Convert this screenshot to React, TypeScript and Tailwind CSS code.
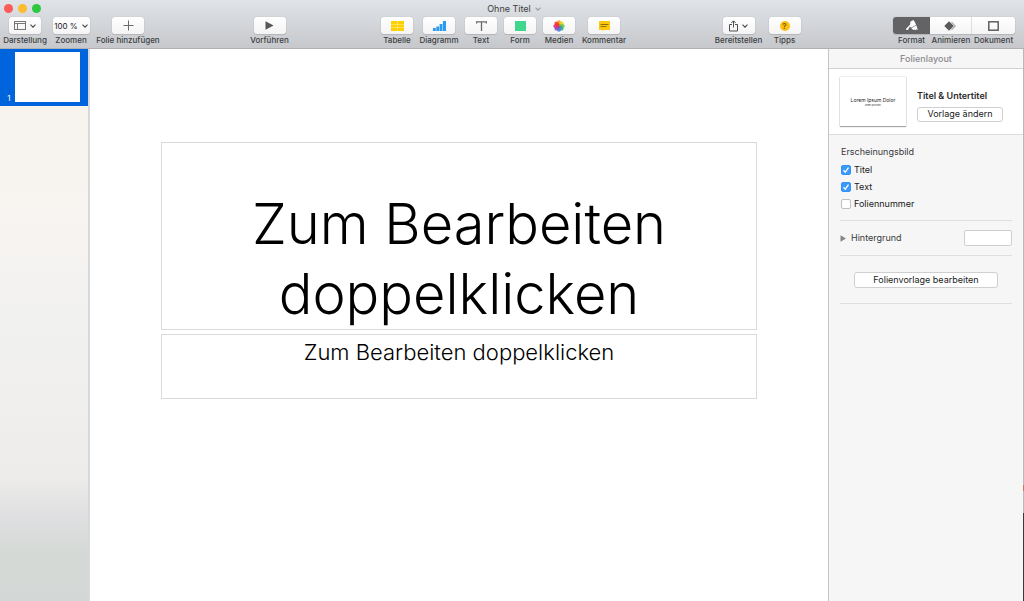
import type { ReactNode } from "react";

const labelClass = "text-[8px] leading-[12px] font-medium text-[#3c3d40] whitespace-nowrap";
const buttonClass =
  "h-[17px] rounded-[3px] bg-gradient-to-b from-white to-[#f4f4f4] shadow-[0_0_1px_rgba(0,0,0,0.3),0_1px_1px_rgba(0,0,0,0.1)] flex items-center justify-center gap-1 text-[#4a4a4a]";

function Chevron() {
  return (
    <svg width="6" height="4" viewBox="0 0 6 4" fill="none" stroke="currentColor" strokeWidth="1.1">
      <path d="M0.5 0.6 3 3.1 5.5 0.6" />
    </svg>
  );
}

function ViewIcon() {
  return (
    <svg width="12" height="9" viewBox="0 0 12 9" fill="none" stroke="#777" strokeWidth="1">
      <rect x="0.5" y="0.5" width="11" height="8" />
      <path d="M0.5 2.5h11M3.5 2.5v6" />
    </svg>
  );
}

function PlusIcon() {
  return (
    <svg width="11" height="11" viewBox="0 0 11 11" stroke="#6a6a6a" strokeWidth="1">
      <path d="M5.5 0.5v10M0.5 5.5h10" />
    </svg>
  );
}

function PlayIcon() {
  return (
    <svg width="9" height="9" viewBox="0 0 9 9" fill="#575757">
      <path d="M0.5 0.2v8.6L8.6 4.5z" />
    </svg>
  );
}

function TableIcon() {
  return (
    <svg width="13" height="10" viewBox="0 0 13 10">
      <rect width="13" height="10" fill="#fff0a0" />
      <path fill="#ffd000" d="M0 0h6.2v3H0zM6.8 0H13v3H6.800zM0 3.500h6.200v3H0zM6.800 3.500H13v3H6.800zM0 7h6.200v3H0zM6.800 7H13v3H6.800z" />
    </svg>
  );
}

function ChartIcon() {
  return (
    <svg width="13" height="10" viewBox="0 0 13 10" fill="#2b9bf2">
      <path d="M0 7h2.800v3H0zM3.300 5.500h2.800V10H3.300zM6.600 3h2.800v7H6.600zM9.900 0H13v10H9.900z" />
    </svg>
  );
}

function TextIcon() {
  return (
    <svg width="11" height="10" viewBox="0 0 11 10" fill="none" stroke="#6a6a6a" strokeWidth="1.3">
      <path d="M0.6 2.4V0.9h9.8v1.5M5.5 0.9V10" />
    </svg>
  );
}

function ShapeIcon() {
  return (
    <svg width="11" height="10" viewBox="0 0 11 10">
      <rect width="11" height="10" fill="#40d68e" />
    </svg>
  );
}

const petals = ["#fba01a", "#e6d51c", "#7cc142", "#35ad8c", "#3f7fe0", "#8450c8", "#dc2f86", "#f23c28"];

function MediaIcon() {
  return (
    <svg width="12" height="12" viewBox="0 0 12 12">
      {petals.map((fill, i) => (
        <ellipse key={fill} cx="6" cy="3.200" rx="2" ry="2.900" fill={fill} opacity="0.9" transform={`rotate(${i * 45} 6 6)`} />
      ))}
    </svg>
  );
}

function CommentIcon() {
  return (
    <svg width="11" height="10" viewBox="0 0 11 10">
      <path d="M0.5 0h10q.5 0 .5.5v8q0 .5-.5.5H5L3.5 10V9h-3Q0 9 0 8.500V.5Q0 0 .5 0z" fill="#fdc90a" />
      <path d="M1.500 3.500h8M1.500 5.500h6" stroke="#8a7012" />
    </svg>
  );
}

function ShareIcon() {
  return (
    <svg width="9" height="12" viewBox="0 0 9 12" fill="none" stroke="#4f4f4f" strokeWidth="1">
      <path d="M3 4.500H0.500v6.500h8V4.500H6M4.500 7.500V1M2.300 3 4.500 0.800 6.700 3" />
    </svg>
  );
}

function BrushIcon() {
  return (
    <svg width="12" height="11" viewBox="0 0 12 11" fill="white">
      <path d="M4.500 1.500 7.500 0l1.400 2.200 1.200 2.500-5 3-1.200-1.200-1.700 2.900q-1.100 1.200-2 .4-.6-.9.600-1.900l3.200-3.200z" />
      <path d="M5.300 8.200 10.300 5.200 11.900 10 10.300 9.300 9.700 10.300 8.200 9.400 7.300 9.900z" />
    </svg>
  );
}

function AnimateIcon() {
  return (
    <svg width="13" height="10" viewBox="0 0 13 10">
      <path d="M8 0.800 12.200 5 8 9.200 3.800 5z" fill="#b5b5b5" />
      <path d="M5 0 10 5 5 10 0 5z" fill="#5a5a5a" stroke="#f8f8f8" strokeWidth="0.500" />
    </svg>
  );
}

function DocumentIcon() {
  return (
    <svg width="11" height="10" viewBox="0 0 11 10" fill="none" stroke="#5f5f5f" strokeWidth="1.500">
      <rect x="0.800" y="0.800" width="9.400" height="8.400" />
    </svg>
  );
}

function ToolItem({ label, width, children, wide }: { label: string; width: string; children: ReactNode; wide?: boolean }) {
  return (
    <div className={`flex flex-col items-center ${width}`}>
      <button aria-label={label} className={`${buttonClass} ${wide ? "w-[37px]" : "w-8"}`}>
        {children}
      </button>
      <span className={labelClass}>{label}</span>
    </div>
  );
}

function TitleBar() {
  return (
    <div className="grid h-[17px] grid-cols-[1fr_auto_1fr] items-center">
      <div className="flex gap-[5px] pl-1">
        <button aria-label="Schließen" className="size-[9px] rounded-full bg-[#fc5b57]" />
        <button aria-label="Minimieren" className="size-[9px] rounded-full bg-[#fdbc2e]" />
        <button aria-label="Zoomen" className="size-[9px] rounded-full bg-[#2bc840]" />
      </div>
      <button className="flex items-center gap-1 pl-1 text-[9px] leading-4 text-[#3c3d40]">
        Ohne Titel
        <span className="text-[#9a9a9c]">
          <Chevron />
        </span>
      </button>
    </div>
  );
}

function Toolbar() {
  return (
    <div className="flex justify-between pl-px pr-[9px]">
      <div className="flex">
        <ToolItem label="Darstellung" width="w-12">
          <ViewIcon />
          <Chevron />
        </ToolItem>
        <ToolItem label="Zoomen" width="w-11" wide>
          <span className="text-[8px] whitespace-nowrap text-[#222]">100 %</span>
          <Chevron />
        </ToolItem>
        <ToolItem label="Folie hinzufügen" width="w-[70px]">
          <PlusIcon />
        </ToolItem>
      </div>
      <ToolItem label="Vorführen" width="w-10">
        <PlayIcon />
      </ToolItem>
      <div className="flex">
        <ToolItem label="Tabelle" width="w-[42px]">
          <TableIcon />
        </ToolItem>
        <ToolItem label="Diagramm" width="w-[42px]">
          <ChartIcon />
        </ToolItem>
        <ToolItem label="Text" width="w-[42px]">
          <TextIcon />
        </ToolItem>
        <ToolItem label="Form" width="w-9">
          <ShapeIcon />
        </ToolItem>
        <ToolItem label="Medien" width="w-[42px]">
          <MediaIcon />
        </ToolItem>
        <ToolItem label="Kommentar" width="w-12">
          <CommentIcon />
        </ToolItem>
      </div>
      <div className="flex">
        <ToolItem label="Bereitstellen" width="w-12">
          <ShareIcon />
          <Chevron />
        </ToolItem>
        <ToolItem label="Tipps" width="w-11">
          <span className="size-[10px] rounded-full bg-[#fdc010] text-[8px] leading-[10px] font-semibold text-[#7a5a00]">?</span>
        </ToolItem>
      </div>
      <div className="flex flex-col">
        <div className="grid h-[17px] grid-cols-[37px_42px_43px] overflow-hidden rounded-[3px] bg-gradient-to-b from-white to-[#f4f4f4] shadow-[0_0_1px_rgba(0,0,0,0.3),0_1px_1px_rgba(0,0,0,0.1)]">
          <button aria-label="Format" className="flex items-center justify-center bg-[#636366]">
            <BrushIcon />
          </button>
          <button aria-label="Animieren" className="flex items-center justify-center border-r border-[#dedede]">
            <AnimateIcon />
          </button>
          <button aria-label="Dokument" className="flex items-center justify-center">
            <DocumentIcon />
          </button>
        </div>
        <div className="grid grid-cols-[37px_42px_43px] justify-items-center">
          <span className={labelClass}>Format</span>
          <span className={labelClass}>Animieren</span>
          <span className={labelClass}>Dokument</span>
        </div>
      </div>
    </div>
  );
}

function SlideList() {
  return (
    <nav className="w-[90px] shrink-0 border-r-2 border-[#d8d9da] bg-[linear-gradient(to_bottom,#f7f4ee_10%,#f8f4f1_30%,#f1f1f0_48%,#f0efed_65%,#ecebe9_78%,#e0e0e2_84%,#d5d9d6_91%,#d3d7d5_100%)]">
      <button className="flex w-full items-end gap-1 bg-[#0065dc] pt-[3px] pr-2 pb-1 pl-[7px] text-white">
        <span className="w-1 text-[8px] leading-[8px]">1</span>
        <span className="h-[50px] flex-1 bg-white" />
      </button>
    </nav>
  );
}

function Canvas() {
  return (
    <main className="flex min-w-0 flex-1 flex-col gap-1 bg-white px-[71px] pt-[93px] text-center font-light text-black">
      <h1 className="border border-[#dadada] px-10 pt-[46px] text-[56px] leading-[70px]">Zum Bearbeiten doppelklicken</h1>
      <p className="border border-[#dadada] pt-[3px] pb-8 text-[22px] leading-7">Zum Bearbeiten doppelklicken</p>
    </main>
  );
}

function CheckRow({ label, checked }: { label: string; checked?: boolean }) {
  return (
    <label className="flex h-[17px] items-center gap-[3px] text-[#1a1a1a]">
      <span className="relative flex size-[10px]">
        <input
          type="checkbox"
          defaultChecked={checked}
          className="peer size-[10px] appearance-none rounded-[2px] border border-[#c0c0c0] bg-white checked:border-[#3393fb] checked:bg-[#3b99fc]"
        />
        <svg
          className="pointer-events-none absolute inset-0 hidden peer-checked:block"
          width="10"
          height="10"
          viewBox="0 0 10 10"
          fill="none"
          stroke="white"
          strokeWidth="1.3"
        >
          <path d="M2.500 5.300 4.300 7.200 7.500 2.600" />
        </svg>
      </span>
      {label}
    </label>
  );
}

function Inspector() {
  return (
    <aside className="w-[195px] shrink-0 border-l border-[#c4c4c4] bg-[#f6f6f6] text-[9px] leading-3 text-[#3a3a3a]">
      <h2 className="border-b border-[#d0d0d0] pt-1 pb-[3px] text-center font-medium text-[#8b8b8d]">Folienlayout</h2>
      <section className="flex items-center gap-[11px] border-b border-[#dcdcdc] bg-white py-2 pl-[11px]">
        <div className="flex h-[49px] w-[66px] flex-col items-center justify-center bg-white text-center text-[#222] shadow-[0_0_1px_rgba(0,0,0,0.4),0_1px_1px_rgba(0,0,0,0.3)]">
          <span className="text-[5px] leading-[6px]">Lorem Ipsum Dolor</span>
          <span className="text-[2px] leading-[4px]">Donec quis nunc</span>
        </div>
        <div className="flex flex-col gap-[5px] pt-2">
          <span className="font-semibold text-[#2b2b2b]">Titel &amp; Untertitel</span>
          <button className="h-[15px] w-[86px] rounded-[3px] border border-[#cfcfcf] bg-white text-[#1a1a1a]">Vorlage ändern</button>
        </div>
      </section>
      <div className="flex flex-col px-[11px]">
        <fieldset className="border-b border-[#dfdfdf] pt-[11px] pb-2 pl-px">
          <legend className="float-left mb-[3px] w-full">Erscheinungsbild</legend>
          <div className="clear-both">
            <CheckRow label="Titel" checked />
            <CheckRow label="Text" checked />
            <CheckRow label="Foliennummer" />
          </div>
        </fieldset>
        <div className="flex h-[35px] items-center justify-between border-b border-[#dfdfdf]">
          <button className="flex items-center gap-[5px]">
            <svg width="6" height="7" viewBox="0 0 6 7" fill="#858585">
              <path d="M0.500 0.300v6.400L6 3.500z" />
            </svg>
            Hintergrund
          </button>
          <button aria-label="Hintergrundfarbe" className="h-4 w-12 rounded-[2px] border border-[#cfcfcf] bg-white" />
        </div>
        <div className="flex h-12 items-center justify-center border-b border-[#dfdfdf]">
          <button className="h-4 w-36 rounded-[3px] border border-[#cfcfcf] bg-white text-[#1a1a1a]">Folienvorlage bearbeiten</button>
        </div>
      </div>
    </aside>
  );
}

export default function App() {
  return (
    <div className="flex h-screen flex-col overflow-hidden bg-white font-['Inter',sans-serif]">
      <header className="h-[49px] shrink-0 border-b border-[#b1b1b4] bg-gradient-to-b from-[#e0e3e7] to-[#c6c8cc]">
        <TitleBar />
        <Toolbar />
      </header>
      <div className="flex min-h-0 flex-1">
        <SlideList />
        <Canvas />
        <Inspector />
        <div className="w-px bg-[linear-gradient(to_bottom,#b8b8b8_79%,#d9706a_79%,#d9706a_80%,#b8b8b8_80%,#b8b8b8_84%,#3a3a3a_84%)]" />
      </div>
    </div>
  );
}
